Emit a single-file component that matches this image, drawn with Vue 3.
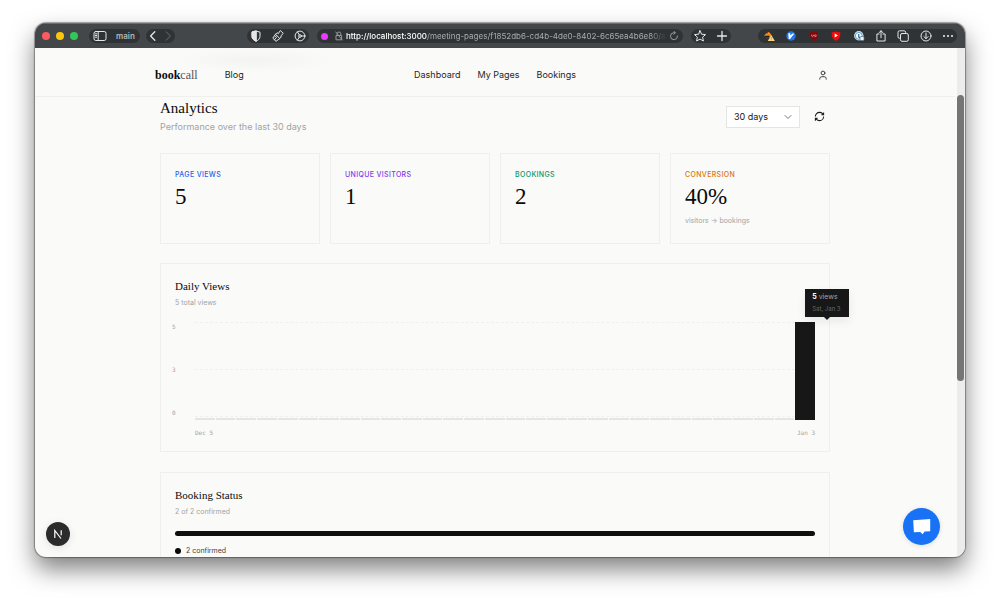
<template>
  <div class="desktop">
    <div class="window">
      <div class="toolbar">
        <div class="lights">
          <span class="light red"></span>
          <span class="light yellow"></span>
          <span class="light green"></span>
        </div>

        <div class="pill profile">
          <button type="button" aria-label="Sidebar">
            <svg viewBox="0 0 14 12" width="14" height="12" class="line">
              <rect x="1" y="1.5" width="12" height="9" rx="1.8" />
              <path d="M5.2 1.5v9M2.5 3.8h1.2M2.5 5.5h1.2M2.5 7.2h1.2" />
            </svg>
          </button>
          <span class="profile-name">main</span>
        </div>

        <div class="pill arrows">
          <button type="button" aria-label="Back">
            <svg viewBox="0 0 12 12" width="12" height="12" class="line"><path d="M7.8 1.8 3.6 6l4.2 4.2" stroke-width="1.3" /></svg>
          </button>
          <button type="button" aria-label="Forward" disabled>
            <svg viewBox="0 0 12 12" width="12" height="12" class="line"><path d="M4.2 1.8 8.4 6l-4.2 4.2" /></svg>
          </button>
        </div>

        <div class="pill tools">
          <button type="button" aria-label="Privacy">
            <svg viewBox="0 0 12 12" width="12" height="12" class="line">
              <path d="M6 1 10 2.2v4C10 8.6 8.4 10.3 6 11.2 3.6 10.3 2 8.6 2 6.2v-4Z" />
              <path d="M6 1 2 2.2v4C2 8.6 3.6 10.3 6 11.2Z" fill="currentColor" />
            </svg>
          </button>
          <button type="button" aria-label="Clean up">
            <svg viewBox="0 0 12 12" width="12" height="12" class="line">
              <path d="M8.6.8 11.3 3.4 8.6 6 9.4 6.900 7.8 8.5 3.500 4.300 5.100 2.700 6 3.500ZM3.500 4.300.8 8.200l3.200 3.100L7.800 8.500M2.400 9.800l2-2.200M4.700 5.500 3.200 7" />
            </svg>
          </button>
          <button type="button" aria-label="Site settings">
            <svg viewBox="0 0 12 12" width="12" height="12" class="line">
              <circle cx="6" cy="6" r="4.900" /><circle cx="6" cy="6" r="1.300" />
              <path d="M7.300 6h3.600M5.300 4.900 3.400 1.800M5.300 7.100l-1.900 3.100" />
            </svg>
          </button>
        </div>

        <div class="pill address">
          <span class="dot"></span>
          <svg viewBox="0 0 8 10" width="8" height="10" class="line lock">
            <path d="M2.200 4.200V2.800a1.800 1.800 0 0 1 3.600 0v1.400M1.400 4.500h5.200v4.300H1.400ZM.8 1l6.400 8" />
          </svg>
          <a class="url" href="#"><b>http://localhost:3000</b>/meeting-pages/f1852db6-cd4b-4de0-8402-6c65ea4b6e80/an</a>
          <button type="button" aria-label="Reload">
            <svg viewBox="0 0 10 10" width="10" height="10" class="line lock">
              <path d="M8.500 5A3.500 3.500 0 1 1 5 1.700h1M4.800.2l1.600 1.500-1.600 1.500" />
            </svg>
          </button>
        </div>

        <div class="pill marks">
          <button type="button" aria-label="Bookmark">
            <svg viewBox="0 0 12 12" width="12" height="12" class="line">
              <path d="m6 .7 1.600 3.500 3.900.4-2.900 2.600.8 3.800L6 9.100l-3.400 1.900.8-3.800L.5 4.600l3.900-.4Z" />
            </svg>
          </button>
          <button type="button" aria-label="New tab">
            <svg viewBox="0 0 12 12" width="12" height="12" class="line"><path d="M6 1.500v9M1.500 6h9" stroke-width="1.300" /></svg>
          </button>
        </div>

        <div class="pill extensions">
          <button type="button" aria-label="Cookie blocker">
            <svg viewBox="0 0 12 12" width="12" height="12">
              <path d="M1 5.500C2.200 4.600 2.800 4.200 3.200 3l1.200.8L5 1.800C7 2.800 8.300 4 8.500 6L6.700 8H3Z" fill="#f58a1f" />
              <path d="M1 5.800h5.500v2H2.500Z" fill="#2a1c12" />
              <path d="M8.300 5 11.800 11H4.800Z" fill="#f5dc85" />
              <path d="M8.300 7.200v1.600M8.300 9.500v.8" stroke="#8d7437" stroke-width=".7" />
            </svg>
          </button>
          <button type="button" aria-label="Vimium">
            <svg viewBox="0 0 12 12" width="12" height="12">
              <circle cx="6" cy="6" r="4.700" fill="#2377e8" />
              <path d="M3.300 3.300h2v2.200L8 3.200l1 .9-4 4.900H3.700Z" fill="#fff" />
            </svg>
          </button>
          <button type="button" aria-label="Content blocker">
            <svg viewBox="0 0 12 12" width="12" height="12">
              <path d="M6 1.200 10 2.600v3C10 8.400 8.300 10 6 10.900 3.700 10 2 8.400 2 5.600v-3Z" fill="#82080c" />
              <path d="M3.700 4.700v1.400q.8 1.100 1.600 0V4.700" fill="none" stroke="#e8cfcf" stroke-width=".6" />
              <circle cx="7.400" cy="5.700" r=".9" fill="none" stroke="#e8cfcf" stroke-width=".6" />
            </svg>
          </button>
          <button type="button" aria-label="Video tweaks">
            <svg viewBox="0 0 12 12" width="12" height="12">
              <path d="M6 1.200 7.300 1.900 10.300 2.200C10.500 6.800 9.500 9 6 10.800 2.500 9 1.500 6.800 1.700 2.200L4.700 1.900Z" fill="#f00a0a" />
              <path d="M4.700 3.600v4L8 5.600Z" fill="#fff" />
            </svg>
          </button>
          <button type="button" aria-label="Passwords">
            <svg viewBox="0 0 12 12" width="12" height="12">
              <circle cx="5.800" cy="5.800" r="4.700" fill="#cde9fb" />
              <circle cx="5.800" cy="5.800" r="3.400" fill="#fff" stroke="#3b91cf" stroke-width=".9" />
              <path d="M5.800 4v3.500h2" fill="none" stroke="#1b3852" />
              <rect x="7" y="6.500" width="4" height="4" rx="1" fill="#e8f5fd" stroke="#5d6f7a" stroke-width=".7" />
            </svg>
          </button>
          <button type="button" aria-label="Share">
            <svg viewBox="0 0 12 12" width="12" height="12" class="line">
              <path d="M4 4H1.900v7h8.200V4H8M6 7.700V.9M3.900 2.800 6 .8l2.100 2" />
            </svg>
          </button>
          <button type="button" aria-label="Tabs">
            <svg viewBox="0 0 12 12" width="12" height="12" class="line">
              <rect x="3.500" y="3.500" width="7.800" height="7.800" rx="1.500" />
              <path d="M3.500 8.300h-1A1.500 1.500 0 0 1 1 6.800V2.300A1.500 1.500 0 0 1 2.500.8h4.600a1.500 1.500 0 0 1 1.500 1.500v1.200" />
            </svg>
          </button>
          <button type="button" aria-label="Downloads">
            <svg viewBox="0 0 12 12" width="12" height="12" class="line">
              <circle cx="6" cy="6" r="5" /><path d="M6 3v5.500M3.900 6.600 6 8.700l2.100-2.100" />
            </svg>
          </button>
          <button type="button" aria-label="More">
            <svg viewBox="0 0 12 12" width="12" height="12" fill="currentColor">
              <circle cx="2" cy="6" r="1.100" /><circle cx="6" cy="6" r="1.100" /><circle cx="10" cy="6" r="1.100" />
            </svg>
          </button>
        </div>
      </div>

      <div class="viewport">
        <div class="page">
          <header class="header">
            <div class="header-inner">
              <div class="brand">
                <a class="logo" href="#"><b>book</b>call</a>
                <a class="nav-link" href="#">Blog</a>
              </div>
              <nav class="nav">
                <a v-for="link in links" :key="link" class="nav-link" href="#">{{ link }}</a>
              </nav>
              <button class="account" type="button" aria-label="Account">
                <svg viewBox="0 0 10 10" width="10" height="10" class="line">
                  <circle cx="5" cy="3" r="1.900" /><path d="M1.800 9.200V8.500a2 2 0 0 1 2-1.800h2.400a2 2 0 0 1 2 1.800v.7" />
                </svg>
              </button>
            </div>
          </header>

          <main class="main">
            <div class="heading">
              <div>
                <h1>Analytics</h1>
                <p>Performance over the last {{ range }} days</p>
              </div>
              <div class="controls">
                <div class="range">
                  <select v-model="range" aria-label="Period">
                    <option v-for="d in [7, 30, 90]" :key="d" :value="d">{{ d }} days</option>
                  </select>
                  <svg viewBox="0 0 8 8" width="8" height="8" class="line chevron"><path d="M1 2.500 4 5.500l3-3" /></svg>
                </div>
                <button class="refresh" type="button" aria-label="Refresh">
                  <svg viewBox="0 0 24 24" width="11" height="11">
                    <path d="M3 12a9 9 0 0 1 9-9 9.750 9.750 0 0 1 6.740 2.740L21 8M21 3v5h-5M21 12a9 9 0 0 1-9 9 9.750 9.750 0 0 1-6.740-2.740L3 16M8 16H3v5" />
                  </svg>
                </button>
              </div>
            </div>

            <section class="stats">
              <article v-for="s in stats" :key="s.label" class="card stat">
                <h3 :class="s.tone">{{ s.label }}</h3>
                <strong>{{ s.value }}</strong>
                <small v-if="s.note">{{ s.note }}</small>
              </article>
            </section>

            <section class="card panel">
              <h2>Daily Views</h2>
              <p class="sub">{{ total }} total views</p>
              <div class="chart">
                <div class="y-axis">
                  <span>5</span><span>3</span><span>0</span>
                </div>
                <div class="plot">
                  <div class="grid-lines"><i></i><i></i><i></i></div>
                  <div class="bars">
                    <div
                      v-for="(v, i) in views"
                      :key="i"
                      class="bar"
                      :class="{ filled: v }"
                      :style="{ height: v ? (v / 5) * 100 + '%' : null }"
                    >
                      <div v-if="v" class="tip">
                        <span><b>{{ v }}</b> views</span>
                        <small>Sat, Jan 3</small>
                      </div>
                    </div>
                  </div>
                </div>
                <div class="x-axis"><span>Dec 5</span><span>Jan 3</span></div>
              </div>
            </section>

            <section class="card panel">
              <h2>Booking Status</h2>
              <p class="sub">2 of 2 confirmed</p>
              <div class="meter"></div>
              <div class="legend"><span class="legend-dot"></span>2 confirmed</div>
            </section>
          </main>
        </div>

        <div class="scrollbar"><div class="thumb"></div></div>

        <button class="dev" type="button" aria-label="Dev tools">
          <svg viewBox="0 0 24 24" width="24" height="24" fill="none" stroke="#fff" stroke-width="1.200">
            <path d="M8.800 16V8.500L15 16.500M15.200 8.200v5" />
          </svg>
        </button>
        <button class="chat" type="button" aria-label="Open chat">
          <svg viewBox="0 0 20 18" width="20" height="18"><path d="M1.200 2.200 18.200 1v12.200l-5.600.4-2 2.600-2.300-2.300-6.400.3Z" fill="#fff" /></svg>
        </button>
      </div>
    </div>
  </div>
</template>

<script setup>
import { computed, ref } from 'vue'

const links = ['Dashboard', 'My Pages', 'Bookings']
const range = ref(30)

const stats = [
  { label: 'Page views', value: '5', tone: 'blue' },
  { label: 'Unique visitors', value: '1', tone: 'purple' },
  { label: 'Bookings', value: '2', tone: 'green' },
  { label: 'Conversion', value: '40%', tone: 'orange', note: 'visitors → bookings' }
]

// one entry per day, most recent last
const views = [...Array(29).fill(0), 5]
const total = computed(() => views.reduce((a, b) => a + b, 0))
</script>

<style>
body {
  margin: 0;
  background: #fff;
}
</style>

<style scoped>
* {
  box-sizing: border-box;
}
.desktop {
  height: 100vh;
  padding: 23px 35px 46px;
  font-family: Inter, "Liberation Sans", sans-serif;
  font-size: 9px;
  line-height: 12px;
  color: #171717;
}
h1, h2, h3, p {
  margin: 0;
}
button {
  display: flex;
  align-items: center;
  justify-content: center;
  padding: 0;
  border: 0;
  background: none;
  color: inherit;
}
a {
  color: inherit;
  text-decoration: none;
}
.line {
  fill: none;
  stroke: currentColor;
  stroke-width: 1;
  stroke-linecap: round;
  stroke-linejoin: round;
}
.window {
  display: flex;
  flex-direction: column;
  height: 100%;
  border-radius: 11px;
  overflow: hidden;
  background: #fafaf9;
  box-shadow: 0 0 1px 1px rgba(0, 0, 0, 0.35), 0 12px 24px rgba(0, 0, 0, 0.5);
}

/* browser toolbar */
.toolbar {
  display: flex;
  align-items: center;
  flex: none;
  height: 25px;
  padding: 0 8px 0 7px;
  background: #43474a;
  border-top: 1px solid #6b6e70;
  color: #e6e6e6;
}
.lights {
  display: flex;
  gap: 6px;
}
.light {
  width: 8px;
  height: 8px;
  border-radius: 50%;
}
.red { background: #ff5a5f; }
.yellow { background: #fdc70c; }
.green { background: #33c759; }
.pill {
  display: flex;
  align-items: center;
  flex: none;
  height: 14px;
  border-radius: 7px;
  background: #303335;
}
.profile {
  gap: 9px;
  margin-left: 11px;
  padding: 0 5px 0 4px;
}
.profile-name {
  font-size: 8px;
  font-weight: 600;
  color: #b4b5b6;
}
.arrows {
  gap: 3px;
  margin-left: 6px;
  padding: 0 1px;
}
.arrows button:disabled {
  color: #6b6e70;
}
.tools {
  justify-content: space-between;
  width: 62px;
  margin-left: auto;
  padding: 0 3px;
}
.address {
  flex: 0 1 366px;
  min-width: 0;
  gap: 3px;
  margin-left: 8px;
  padding: 0 4px;
}
.dot {
  flex: none;
  width: 7px;
  height: 7px;
  margin-right: 4px;
  border-radius: 50%;
  background: #e83cf5;
}
.lock {
  flex: none;
  color: #96999b;
}
.url {
  flex: 1;
  min-width: 0;
  overflow: hidden;
  white-space: nowrap;
  font-size: 8px;
  color: #a9abac;
  mask-image: linear-gradient(90deg, #000 95%, transparent);
}
.url b {
  font-weight: 500;
  color: #fff;
}
.marks {
  justify-content: space-between;
  width: 40px;
  margin-left: 8px;
  padding: 0 3px;
}
.extensions {
  justify-content: space-between;
  width: 199px;
  margin-left: 27px;
  padding: 0 3px 0 5px;
}

/* page */
.viewport {
  position: relative;
  display: flex;
  flex: 1;
  min-height: 0;
}
.page {
  flex: 1;
  min-width: 0;
  overflow: hidden;
}
.header {
  padding: 0 20px;
  border-bottom: 1px solid #efefee;
  background: radial-gradient(ellipse 80px 12px at 220px 12px, #f3f3f2, transparent);
}
.header-inner {
  display: grid;
  grid-template-columns: 1fr auto 1fr;
  align-items: center;
  max-width: 680px;
  height: 48px;
  margin: 0 auto;
  padding-top: 5px;
}
.brand {
  display: flex;
  align-items: center;
  gap: 27px;
}
.logo {
  font-family: "Liberation Serif", serif;
  font-size: 12px;
  color: #57534e;
}
.logo b {
  color: #0a0a0a;
}
.nav {
  display: flex;
  gap: 17px;
}
.nav-link {
  color: #292524;
}
.account {
  justify-self: end;
  width: 25px;
  height: 25px;
  color: #44403c;
}
.main {
  max-width: 710px;
  margin: 0 auto;
  padding: 3px 20px 0;
}
.heading {
  display: flex;
  justify-content: space-between;
  align-items: center;
  height: 33px;
}
h1, h2 {
  font-family: "Liberation Serif", serif;
  font-weight: 400;
  color: #0a0a0a;
}
h1 {
  font-size: 15px;
  line-height: 16px;
}
.heading p {
  margin-top: 5px;
  color: #a3a3a3;
}
.controls {
  display: flex;
  align-items: center;
}
.range {
  position: relative;
}
.range select {
  width: 74px;
  height: 22px;
  padding: 0 7px;
  appearance: none;
  border: 1px solid #e7e5e4;
  border-radius: 0;
  background: #fff;
  font: inherit;
  color: #171717;
}
.chevron {
  position: absolute;
  top: 7px;
  right: 8px;
  color: #78716c;
  pointer-events: none;
}
.refresh {
  width: 22px;
  height: 22px;
  margin: 0 0 0 8px;
}
.refresh svg {
  fill: none;
  stroke: #171717;
  stroke-width: 2.2;
}
.card {
  border: 1px solid #efefee;
}
.stats {
  display: grid;
  grid-template-columns: repeat(4, 1fr);
  gap: 10px;
  margin-top: 20px;
}
.stat {
  display: flex;
  flex-direction: column;
  min-height: 91px;
  padding: 15px 14px 14px;
}
.stat h3 {
  font-size: 7px;
  font-weight: 500;
  text-transform: uppercase;
  letter-spacing: 0.05em;
}
.blue { color: #2563eb; }
.purple { color: #7c3aed; }
.stat .green { background: none; color: #059669; }
.orange { color: #d97706; }
.stat strong {
  margin-top: 3px;
  font-family: "Liberation Serif", serif;
  font-size: 23px;
  font-weight: 400;
  line-height: 26px;
  color: #0a0a0a;
}
.stat small {
  margin-top: 5px;
  font-size: 7px;
  color: #a3a3a3;
}
.panel {
  margin-top: 20px;
  padding: 15px 14px 13px;
}
.stats + .panel {
  margin-top: 19px;
}
h2 {
  font-size: 11px;
  line-height: 14px;
}
.sub {
  margin-top: 4px;
  font-size: 7px;
  color: #a3a3a3;
}
.chart {
  display: grid;
  grid-template-columns: 20px 1fr;
  margin-top: 13px;
}
.y-axis {
  display: flex;
  flex-direction: column;
  justify-content: space-between;
  height: 96px;
  margin-left: -3px;
}
.y-axis, .x-axis {
  font-family: "DejaVu Sans Mono", monospace;
  font-size: 6px;
  line-height: 10px;
  color: #a3a3a3;
}
.plot {
  display: grid;
  height: 98px;
}
.grid-lines, .bars {
  grid-area: 1 / 1;
}
.grid-lines {
  display: flex;
  flex-direction: column;
  justify-content: space-between;
  padding-bottom: 3px;
}
.grid-lines i {
  border-top: 1px dashed #f0f0ef;
}
.bars {
  display: flex;
  align-items: flex-end;
  gap: 1px;
}
.bar {
  position: relative;
  flex: 1;
  height: 2px;
  background: #e5e5e4;
}
.bar.filled {
  background: #171717;
}
.tip {
  position: absolute;
  bottom: calc(100% + 5px);
  left: 50%;
  display: flex;
  flex-direction: column;
  width: 44px;
  height: 28px;
  padding: 2px 0 0 7px;
  background: #171717;
  color: #a3a3a3;
  font-size: 7px;
  white-space: nowrap;
  box-shadow: 0 4px 10px rgba(0, 0, 0, 0.08);
}
.tip::after {
  content: "";
  position: absolute;
  top: 100%;
  left: 50%;
  margin-left: -3px;
  border: 3px solid transparent;
  border-top-color: #171717;
}
.tip b {
  color: #fff;
}
.tip small {
  font-size: 6px;
  color: #666;
}
.x-axis {
  display: flex;
  grid-column: 2;
  justify-content: space-between;
  margin-top: 8px;
}
.meter {
  height: 5px;
  margin-top: 13px;
  border-radius: 3px;
  background: #0f0f0f;
}
.legend {
  display: flex;
  align-items: center;
  gap: 5px;
  margin-top: 9px;
  font-size: 7px;
  color: #44403c;
}
.legend-dot {
  width: 6px;
  height: 6px;
  border-radius: 50%;
  background: #0a0a0a;
}
.scrollbar {
  width: 10px;
  padding: 47px 1px 0 2px;
  background: linear-gradient(90deg, transparent 2px, #ececec 2px);
}
.thumb {
  height: 62%;
  border-radius: 4px;
  background: #757575;
}
.dev, .chat {
  position: absolute;
  border-radius: 50%;
}
.dev {
  left: 11px;
  bottom: 11px;
  width: 24px;
  height: 24px;
  background: #2b2b2b;
  box-shadow: 0 2px 8px rgba(0, 0, 0, 0.1);
}
.chat {
  right: 25px;
  bottom: 12px;
  width: 37px;
  height: 37px;
  background: #1972f5;
  box-shadow: 0 1px 5px rgba(0, 0, 0, 0.12);
}
</style>
